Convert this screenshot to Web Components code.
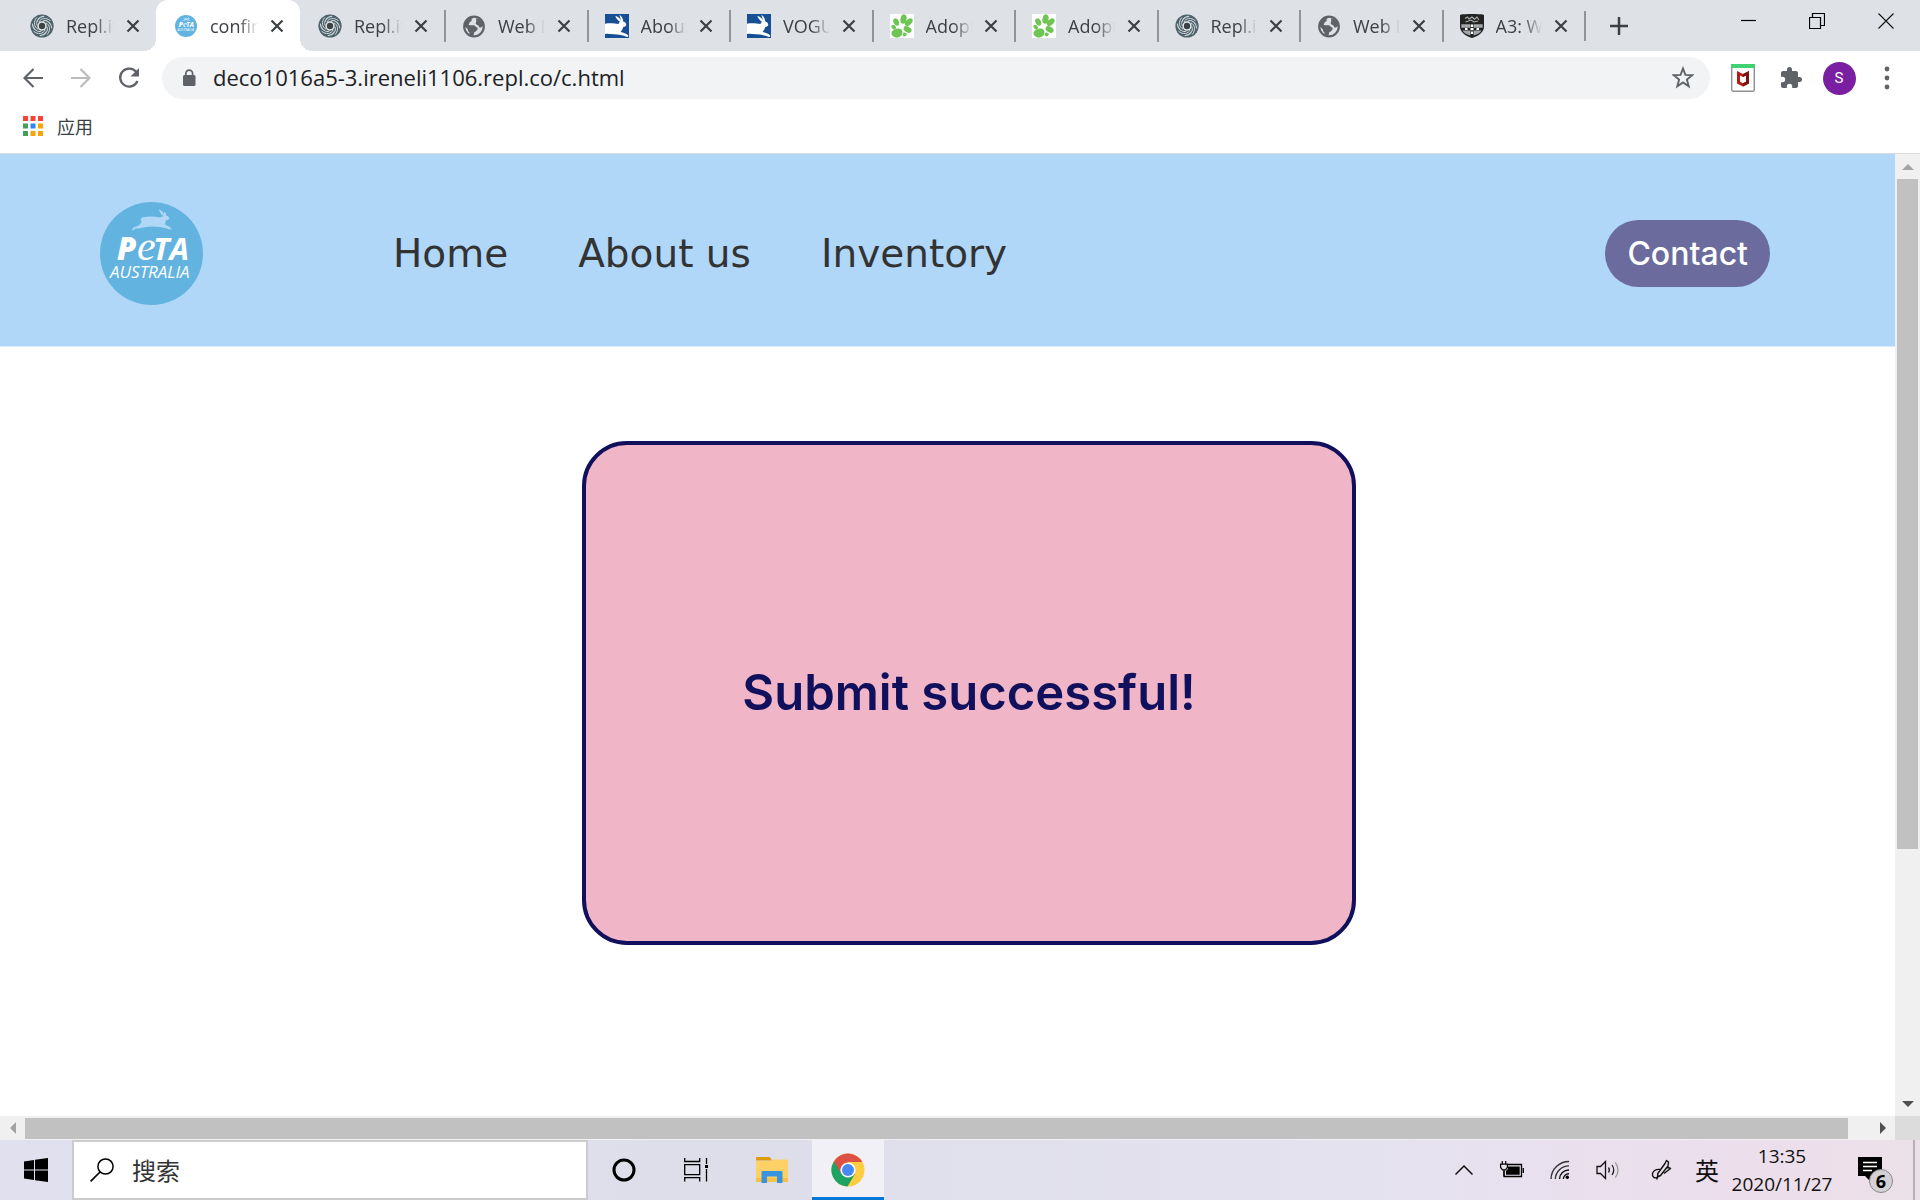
<!DOCTYPE html>
<html lang="en">
<head>
<meta charset="utf-8">
<title>confirmation</title>
<style>
  body { margin: 0; background: #fff; }
</style>
</head>
<body>
<desktop-screen></desktop-screen>

<script>
const UI_FONT = '"Open Sans", "Noto Sans CJK SC", sans-serif';

function define(name, markup, setup) {
  const template = document.createElement('template');
  template.innerHTML = markup;
  customElements.define(name, class extends HTMLElement {
    constructor() {
      super();
      this.attachShadow({ mode: 'open' }).append(template.content.cloneNode(true));
    }
    connectedCallback() { if (setup) setup(this, this.shadowRoot); }
  });
}

const swirlArms = Array.from({ length: 8 }, (_, i) =>
  `<path d="M9 8C10.500 4.200 16 3 20.500 6.800" transform="rotate(${i * 45} 12 12)"/>`).join('');

const ICONS = {
  swirl: `<svg width="24" height="24" viewBox="0 0 24 24"><circle cx="12" cy="12" r="11.600" fill="#4e626b"/><g fill="none" stroke="#cfd7db" stroke-width="1">${swirlArms}</g><circle cx="12" cy="12" r="4.700" fill="#e4e8ea"/><circle cx="12" cy="12" r="3.200" fill="#3b4347"/></svg>`,
  globe: `<svg width="24" height="24" viewBox="0 0 24 24"><circle cx="12" cy="12.500" r="9.800" fill="none" stroke="#5f6368" stroke-width="2.2"/><path fill="#5f6368" d="M2 11C3 6 7 2.500 12 2.500c-.5 1.500-1.500 2-2.500 2.500.5 1.500 0 2.500-1.500 3-.8.6-.5 2-1.500 2.500.5 1 2.500.5 5 .8 1.800.2 2 1.700 3 2 1.500.2 1.500 1.500.8 2.500-1 1-1.300 2.200-2.800 2.200-.7 1-.5 2.500-1 3.500C8 22 7 21 7.500 18.500 5.500 17.500 6.500 15 4.500 14 3 13 2 12.500 2 11zM14 4.500c3-.5 7 3 7.500 7-1 1-2.500 2.500-4 2-1-1-.5-2.200-2-2.500-1.500-.5-2.200-1.500-1.500-3 .8-1 0-2 0-3.500z"/></svg>`,
  rabbit: `<svg width="24" height="24" viewBox="0 0 24 24"><rect width="24" height="24" fill="#174f94"/><path fill="#fff" d="M0 9.700C5 8.700 10 9.500 13.500 10c.3-1 .7-1.600 1.500-2.200C13 6.500 11 4.500 10.300 2c2.500.3 4.500 2 5.700 4.500L14.400.8c2.300 1.500 3.800 4 3.800 6.800 2 .6 3 1.800 3 3.200.2 1.300-1.200 2-3 2.200-.5 2-1.400 3.500-2.700 5 3 .5 5.500 1.500 7.500 3.300.8.800 0 2-1 1.600-4-1.600-8.500-2.400-13-2.600C6 20.200 3 19.600 0 20z"/></svg>`,
  paw: `<svg width="24" height="24" viewBox="0 0 24 24"><rect width="24" height="24" fill="#fff"/><g fill="#6fc553"><ellipse cx="13.500" cy="5" rx="3" ry="4.700" transform="rotate(14 13.500 5)"/><ellipse cx="6.200" cy="8" rx="2.700" ry="3.900" transform="rotate(-24 6.200 8)"/><ellipse cx="18.700" cy="8.200" rx="2.800" ry="4.600" transform="rotate(48 18.700 8.200)"/><ellipse cx="3.700" cy="13.200" rx="2" ry="2.700" transform="rotate(-45 3.700 13.200)"/><ellipse cx="17.600" cy="15.500" rx="2.800" ry="4.300" transform="rotate(-62 17.600 15.500)"/><path d="M1.600 18.300c.8-2.300 4-3.800 7-3.900 2.600 0 4.200 1.800 3.800 4.600-.4 3-3.200 5-6.200 4.600-2.900-.5-5.200-2.600-4.600-5.300z"/><path d="M13.500 18.500q2.500-.5 3.500 1.500-.8 2.500-3 2.500-2-1.500-.5-4z"/></g></svg>`,
  crest: `<svg width="24" height="24" viewBox="0 0 24 24"><path fill="#222" d="M0 1c2-1.200 22-1.200 24 0v12c0 5-6 9.500-12 11C6 22.500 0 18 0 13z"/><path fill="none" stroke="#aeb2b6" stroke-width="1.100" d="M5 4.500l2.500-1.500L9 5l3-2 2.500 2.200L17 3l2 3M5.500 8l3-1 2.500-1 3 2 4-1"/><path fill="#a4a8ac" d="M1.300 10.200h9v3.500h-9zM13.700 10.200h9v3.500h-9zM2.500 16.500h7.800v5C6.500 20.500 3.500 18.800 2.500 16.500zM13.700 16.500h7.800c-1 2.300-4 4-7.800 5z"/><path fill="#fff" d="M10.800 10.500h2.400v2.500h-2.400zM10.500 14h3v2.200h-3zM10.800 17.500h2.400V20h-2.400zM5 14h2.500v2H5zM16.500 14H19v2h-2.500z"/></svg>`,
  cross: `<svg width="14" height="14" viewBox="0 0 14 14"><path d="M1.500 1.500l11 11M12.500 1.500l-11 11" stroke="#3c4043" stroke-width="2.200"/></svg>`,
  plus: `<svg width="18" height="18" viewBox="0 0 18 18"><path d="M9 0v18M0 9h18" stroke="#3c4043" stroke-width="2.500"/></svg>`,
  minimize: `<svg width="16" height="16" viewBox="0 0 16 16"><path d="M1 7.500h15" stroke="#000" stroke-width="1.200"/></svg>`,
  restore: `<svg width="16" height="16" viewBox="0 0 16 16"><path d="M.5 4.500h11v11H.5zM3.500 4.500v-4h12v12h-4" fill="none" stroke="#000" stroke-width="1.200"/></svg>`,
  closeWindow: `<svg width="16" height="16" viewBox="0 0 16 16"><path d="M.5.5l15 15M15.500.5l-15 15" stroke="#111" stroke-width="1.100"/></svg>`,
  back: `<svg width="20" height="20" viewBox="0 0 20 20"><path d="M20 10H2M10.500 1L1.500 10l9 9" fill="none" stroke="#5f6368" stroke-width="2.200"/></svg>`,
  forward: `<svg width="20" height="20" viewBox="0 0 20 20"><path d="M0 10h18M9.500 1l9 9-9 9" fill="none" stroke="#babcbe" stroke-width="2.200"/></svg>`,
  reload: `<svg width="22" height="22" viewBox="0 0 22 22"><path d="M18.300 5A9 9 0 1 0 19.500 14" fill="none" stroke="#5f6368" stroke-width="2.300"/><path d="M21 1v8.500h-8.500z" fill="#5f6368"/></svg>`,
  lock: `<svg width="14" height="18" viewBox="0 0 14 18"><rect x="1" y="6" width="12.500" height="11" rx="1.500" fill="#5f6368"/><path d="M3.800 7V4.500a3.400 3.400 0 0 1 6.800 0V7" fill="none" stroke="#5f6368" stroke-width="1.700"/></svg>`,
  star: `<svg width="22" height="24" viewBox="0 0 22 24"><path d="M11 2.500l2.400 6.400 6.800.3-5.300 4.300 1.800 6.700L11 16.400l-5.700 3.800 1.800-6.700-5.300-4.300 6.800-.3z" fill="none" stroke="#5f6368" stroke-width="1.900"/></svg>`,
  shield: `<svg width="24" height="28" viewBox="0 0 24 28"><rect x=".7" y=".7" width="22.600" height="26.600" rx="1.500" fill="#fff" stroke="#8d9196" stroke-width="1.400"/><path d="M0 0h24v4H0z" fill="#3ed273"/><path d="M6 7l6 3 6-3v12.500L12 22.500l-6-3zM9 11.500v6.300l3 1.500 3-1.500v-6.300l-3 1.500z" fill="#b51c12" fill-rule="evenodd"/><path d="M12 10l6-3v12.500L12 22.500v-3.200l3-1.500v-6.300L12 13z" fill="#7d1411"/></svg>`,
  puzzle: `<svg width="24" height="24" viewBox="0 0 24 24"><path fill="#5f6368" d="M20.500 11H19V7c0-1.100-.9-2-2-2h-4V3.500a2.500 2.500 0 0 0-5 0V5H4c-1.100 0-2 .9-2 2v3.800h1.500a2.700 2.700 0 0 1 0 5.400H2V20c0 1.100.9 2 2 2h3.800v-1.500a2.700 2.700 0 0 1 5.400 0V22H17c1.100 0 2-.9 2-2v-4h1.500a2.500 2.500 0 0 0 0-5z"/></svg>`,
  dots: `<svg width="6" height="24" viewBox="0 0 6 24"><g fill="#5f6368"><circle cx="3" cy="3" r="2.400"/><circle cx="3" cy="12" r="2.400"/><circle cx="3" cy="21" r="2.400"/></g></svg>`,
  apps: `<svg width="20" height="20" viewBox="0 0 20 20"><path fill="#f44336" d="M0 0h5v5H0zM7.500 0h5v5h-5zM15 0h5v5h-5z"/><path fill="#43a05b" d="M0 7.500h5v5H0zM0 15h5v5H0z"/><path fill="#2f86f6" d="M7.500 7.500h5v5h-5z"/><path fill="#f2a60c" d="M15 7.500h5v5h-5zM7.500 15h5v5h-5zM15 15h5v5h-5z"/></svg>`,
  windows: `<svg width="24" height="24" viewBox="0 0 24 24"><path d="M0 3.400L10 2v9.500H0zM11 1.800L24 0v11.500H11zM0 12.500h10V22L0 20.600zM11 12.500h13V24l-13-1.800z"/></svg>`,
  search: `<svg width="24" height="24" viewBox="0 0 24 24"><circle cx="15.500" cy="8.500" r="7.600" fill="none" stroke="#000" stroke-width="1.500"/><path d="M10 14L.6 23.400" stroke="#000" stroke-width="1.700"/></svg>`,
  cortana: `<svg width="24" height="24" viewBox="0 0 24 24"><circle cx="12" cy="12" r="10" fill="none" stroke="#000" stroke-width="3"/></svg>`,
  taskView: `<svg width="24" height="24" viewBox="0 0 24 24"><path d="M.7 0v3.500h15V0M.7 6.700h15v10H.7zM.7 23.500V19.700h15v3.800M22.500 0v6M22.500 11v12.500" fill="none" stroke="#000" stroke-width="1.300"/><path d="M21 7h3v3h-3z"/></svg>`,
  folder: `<svg width="32" height="28" viewBox="0 0 32 28"><path d="M0 2q0-1 1-1h12q1 0 1.500 1l1.500 2.500H0z" fill="#dd9b08"/><path d="M0 5h15l1.500-1.500H31q1 0 1 1V25q0 1-1 1H1q-1 0-1-1z" fill="#fdd166"/><path d="M0 22h32v3q0 1-1 1H1q-1 0-1-1z" fill="#f8c146"/><path d="M5.500 27V16q0-1 1-1h19q1 0 1 1v11H21v-6.500H11V27z" fill="#3993dd"/></svg>`,
  chrome: `<svg width="34" height="34" viewBox="0 0 34 34"><circle cx="17" cy="17" r="16.500" fill="#fdcd3f"/><path d="M17 17L3 8.200A16.500 16.500 0 0 0 16.500 33.500L24 21z" fill="#1da462"/><path d="M3 8.300A16.500 16.500 0 0 1 31.400 9H17L10.300 21z" fill="#dd5144"/><circle cx="17" cy="17" r="7.600" fill="#fff"/><circle cx="17" cy="17" r="6" fill="#4688f4"/></svg>`,
  chevron: `<svg width="20" height="12" viewBox="0 0 20 12"><path d="M1.500 10.500L10 2l8.500 8.500" fill="none" stroke="#111" stroke-width="1.500"/></svg>`,
  battery: `<svg width="24" height="18" viewBox="0 0 24 18"><path d="M8 3.500h13.500v12H4V10M23.300 7v5" fill="none" stroke="#000" stroke-width="1.300"/><path d="M8 5.500h11.700v8.200H6V10l2-2z"/><path d="M2.300 0v3M5.700 0v3M.6 3.200h6.800v3.300L5.500 8.800h-3L.6 6.500zM4 9v6" fill="#e6e1ef" stroke="#000" stroke-width="1.200"/></svg>`,
  wifi: `<svg width="20" height="20" viewBox="0 0 20 20"><circle cx="17.300" cy="17.300" r="1.700"/><g fill="none" stroke-width="1.400"><path d="M1 19A18 18 0 0 1 19 1.500M5.300 19A13.500 13.500 0 0 1 19 5.900" stroke="#333"/><path d="M9.500 19A9.300 9.300 0 0 1 19 10M13.300 19A5.500 5.500 0 0 1 19 13.700" stroke="#111"/></g></svg>`,
  speaker: `<svg width="24" height="20" viewBox="0 0 24 20"><path d="M1 6.500h3.500L9.500 1.500v17L4.500 13.500H1z" fill="none" stroke="#111" stroke-width="1.300"/><path d="M12.500 7.500q1.800 2.500 0 5M16 5q3.500 5 0 10" fill="none" stroke="#222" stroke-width="1.300"/><path d="M19.300 2.300q5.400 7.700 0 15.400" fill="none" stroke="#999" stroke-width="1.300"/></svg>`,
  pen: `<svg width="22" height="22" viewBox="0 0 22 22"><path d="M15.500 1.500l2 1.500-.5 4-7.500 9.500-3 1.500.3-3.500L14 4.500zM16 8l3.500 1.500L13 14.500M10 10.500Q3 9.500 1.500 14.500C.8 18 4 20 6.500 18l-.8 2.500" fill="none" stroke="#111" stroke-width="1.400" stroke-linejoin="round"/></svg>`,
  notice: `<svg width="24" height="26" viewBox="0 0 24 26"><path d="M0 0h24v19H12v5l-5-5H0z"/><path d="M5 5.500h14M5 9.500h14M5 13.500h9" stroke="#fff" stroke-width="1.300"/></svg>`,
  arrow: `<svg width="12" height="6" viewBox="0 0 12 6"><path d="M0 6L6 0l6 6z" fill="currentColor"/></svg>`,
};

define('ui-icon', `<style>:host{display:inline-flex;flex:none} svg{display:block}</style>`, (el, root) => {
  if (!root.querySelector('svg')) root.innerHTML += ICONS[el.getAttribute('name')];
});

define('peta-logo', `
<style>
  :host { display: block; flex: none; width: 103px; height: 103px; }
  svg { display: block; width: 100%; height: 100%; }
  text { fill: #fff; font-style: italic; font-family: "Open Sans", sans-serif; }
</style>
<svg viewBox="0 0 103 103" role="img" aria-label="PeTA Australia">
  <circle cx="51.500" cy="51.500" r="51.500" fill="#62b3e0"/>
  <path fill="#b0d7f8" d="M42 15.500q9-2 18 0l3.500-1.500q-4-2.500-4.500-6.800 3.500 1.500 5 4.800l.5-2.500q2 1.500 1.800 4.200 3.500 1 2.700 3.300-1 1.500-3.200 1.300l-.8 4.200q4.500 2 7 4.500-2.500.8-5-.6-6-2-15-2-8 .4-12.500 2l-4 .2-3.300 2.200q-1-1.600 1.500-3.600l4-1.200q3.500-2.200 4-4.500-2.200-1.500.3-4z"/>
  <text x="17" y="58" font-size="31" font-weight="800">P</text>
  <text x="37" y="58" font-size="42" style="font-family:'Liberation Serif',serif">e</text>
  <text x="53" y="58" font-size="31" font-weight="700">TA</text>
  <text x="10" y="76" font-size="17">AUSTRALIA</text>
</svg>`);

define('browser-tab', `
<style>
  :host { display: flex; flex: 1 1 0; align-items: center; min-width: 0; height: 51px; box-sizing: border-box; padding: 0 16px 0 16px; position: relative; border-left: 2px solid transparent; }
  :host([divided]) { border-image: linear-gradient(transparent 11px, #919498 11px 41px, transparent 41px) 1; border-left: 2px solid; }
  :host([wide]) { flex: 0 0 144px; }
  :host([active]) { background: #fff; border-left-color: #fff; border-radius: 12px 12px 0 0; }
  :host([active])::before, :host([active])::after { content: ""; position: absolute; bottom: 0; width: 12px; height: 12px; }
  :host([active])::before { left: -14px; background: radial-gradient(circle at 0 0, transparent 12px, #fff 12px); }
  :host([active])::after { right: -12px; background: radial-gradient(circle at 100% 0, transparent 12px, #fff 12px); }
  .icon { display: flex; flex: none; justify-content: center; width: 24px; margin-right: 12px; }
  .title { flex: 1; min-width: 0; overflow: hidden; white-space: nowrap; font: 18px/26px ${UI_FONT}; color: #3c4043; -webkit-mask-image: linear-gradient(90deg, #000 60%, transparent 100%); mask-image: linear-gradient(90deg, #000 60%, transparent 100%); }
  button { display: flex; flex: none; margin: 0 0 0 12px; padding: 0; border: 0; background: none; }
</style>
<span class="icon"><slot name="icon"></slot></span>
<span class="title"><slot></slot></span>
<button aria-label="Close tab"><ui-icon name="cross"></ui-icon></button>`);

define('tab-strip', `
<style>
  :host { display: flex; align-items: flex-start; justify-content: space-between; height: 51px; background: #dee1e6; }
  .tabs { display: flex; flex: 0 1 1616px; align-items: center; padding-left: 12px; min-width: 0; }
  button { display: flex; align-items: center; justify-content: center; padding: 0; border: 0; background: none; }
  .new { flex: none; margin-left: 24px; }
  .end { flex: none; width: 2px; height: 30px; background: #919498; }
  .window { display: flex; flex: none; }
  .window button { width: 69px; height: 42px; }
  peta-logo { width: 22px; height: 22px; }
</style>
<div class="tabs">
  <browser-tab wide><ui-icon slot="icon" name="swirl"></ui-icon>Repl.it</browser-tab>
  <browser-tab wide active><peta-logo slot="icon"></peta-logo>confirm</browser-tab>
  <browser-tab wide><ui-icon slot="icon" name="swirl"></ui-icon>Repl.it</browser-tab>
  <browser-tab divided><ui-icon slot="icon" name="globe"></ui-icon>Web D</browser-tab>
  <browser-tab divided><ui-icon slot="icon" name="rabbit"></ui-icon>About</browser-tab>
  <browser-tab divided><ui-icon slot="icon" name="rabbit"></ui-icon>VOGUE</browser-tab>
  <browser-tab divided><ui-icon slot="icon" name="paw"></ui-icon>Adopt</browser-tab>
  <browser-tab divided><ui-icon slot="icon" name="paw"></ui-icon>Adopt</browser-tab>
  <browser-tab divided><ui-icon slot="icon" name="swirl"></ui-icon>Repl.it</browser-tab>
  <browser-tab divided><ui-icon slot="icon" name="globe"></ui-icon>Web D</browser-tab>
  <browser-tab divided><ui-icon slot="icon" name="crest"></ui-icon>A3: W</browser-tab>
  <span class="end"></span>
  <button class="new" aria-label="New tab"><ui-icon name="plus"></ui-icon></button>
</div>
<div class="window">
  <button aria-label="Minimize"><ui-icon name="minimize"></ui-icon></button>
  <button aria-label="Restore"><ui-icon name="restore"></ui-icon></button>
  <button aria-label="Close"><ui-icon name="closeWindow"></ui-icon></button>
</div>`);

define('address-bar', `
<style>
  :host { display: flex; align-items: center; padding: 6px 9px 6px 9px; background: #fff; }
  button { display: flex; flex: none; align-items: center; justify-content: center; width: 48px; height: 42px; padding: 0; border: 0; background: none; }
  .field { display: flex; flex: 1; align-items: center; height: 42px; margin: 0 9px 0 9px; padding: 0 3px 0 20px; border-radius: 21px; background: #f1f3f4; box-sizing: border-box; }
  input { flex: 1; min-width: 0; height: 40px; margin: 0 0 2px 17px; padding: 0; border: 0; outline: 0; box-sizing: border-box; font: 22px/40px ${UI_FONT}; color: #202124; background: none; }
  .avatar span { display: flex; align-items: center; justify-content: center; width: 33px; height: 33px; border-radius: 50%; background: #7b1fa2; color: #fff; font: 15px/33px Roboto, sans-serif; }
</style>
<button aria-label="Back"><ui-icon name="back"></ui-icon></button>
<button aria-label="Forward"><ui-icon name="forward"></ui-icon></button>
<button aria-label="Reload"><ui-icon name="reload"></ui-icon></button>
<div class="field">
  <ui-icon name="lock"></ui-icon>
  <input type="text" aria-label="Address" value="deco1016a5-3.ireneli1106.repl.co/c.html" spellcheck="false">
  <button aria-label="Bookmark"><ui-icon name="star"></ui-icon></button>
</div>
<button aria-label="Antivirus"><ui-icon name="shield"></ui-icon></button>
<button aria-label="Extensions"><ui-icon name="puzzle"></ui-icon></button>
<button class="avatar" aria-label="Profile"><span>S</span></button>
<button aria-label="Menu"><ui-icon name="dots"></ui-icon></button>`);

define('bookmark-bar', `
<style>
  :host { display: flex; align-items: center; height: 42px; padding: 0 0 6px 23px; border-bottom: 1px solid #dcdcdc; background: #fff; }
  a { display: flex; align-items: center; gap: 14px; color: #3c4043; text-decoration: none; font: 18px/24px "Noto Sans CJK SC", sans-serif; }
</style>
<a href="#apps"><ui-icon name="apps"></ui-icon>应用</a>`);

define('site-header', `
<style>
  :host { display: flex; align-items: center; padding: 48px 125px 41px 100px; background: #b0d7f8; border-bottom: 1px solid #d8ebfb; }
  nav { display: flex; flex: 1; gap: 70px; margin-left: 190px; }
  nav a { color: #333; text-decoration: none; font: 39px/48px "DejaVu Sans", sans-serif; }
  .contact { padding: 14px 22px; border-radius: 34px; background: #6b6b9e; color: #fff; text-decoration: none; font: 500 32px/39px Inter, sans-serif; }
</style>
<peta-logo></peta-logo>
<nav><a href="#home">Home</a><a href="#about">About us</a><a href="#inventory">Inventory</a></nav>
<a class="contact" href="#contact">Contact</a>`);

define('message-card', `
<style>
  :host { display: flex; align-items: center; justify-content: center; width: 774px; height: 504px; box-sizing: border-box; border: 4px solid #10105c; border-radius: 45px; background: #f0b6c8; color: #10105c; }
  h1 { margin: 0; font: 600 49px/60px Inter, sans-serif; }
</style>
<h1><slot></slot></h1>`);

define('scroll-bar', `
<style>
  :host { display: flex; flex-direction: column; align-items: center; width: 25px; background: #f0f0f0; }
  button { display: flex; flex: none; align-items: center; justify-content: center; width: 25px; height: 25px; padding: 0; border: 0; background: none; color: #a3a3a3; }
  .last { color: #505050; }
  .track { display: flex; flex: 1; flex-direction: column; }
  .thumb { flex: 0 0 var(--thumb); width: 21px; background: #c1c1c1; }
  .last ui-icon { transform: rotate(180deg); }
  :host([horizontal]) { flex-direction: row; width: auto; height: 24px; }
  :host([horizontal]) .track { flex-direction: row; }
  :host([horizontal]) .thumb { width: auto; height: 21px; }
  :host([horizontal]) ui-icon { transform: rotate(-90deg); }
  :host([horizontal]) .last ui-icon { transform: rotate(90deg); }
</style>
<button aria-label="Scroll back"><ui-icon name="arrow"></ui-icon></button>
<div class="track"><div class="thumb"></div></div>
<button class="last" aria-label="Scroll forward"><ui-icon name="arrow"></ui-icon></button>`);

define('page-view', `
<style>
  :host { display: grid; grid-template: minmax(0, 1fr) 24px / minmax(0, 1fr) 25px; min-height: 0; background: #fff; }
  .page { overflow: hidden; }
  main { display: flex; justify-content: center; padding: 94px 0 0 43px; }
  .down { --thumb: 73.5%; }
  .across { --thumb: 98.8%; }
  .corner { background: #dcdcdc; }
</style>
<div class="page">
  <site-header></site-header>
  <main><message-card>Submit successful!</message-card></main>
</div>
<scroll-bar class="down"></scroll-bar>
<scroll-bar class="across" horizontal></scroll-bar>
<div class="corner"></div>`);

define('task-bar', `
<style>
  :host { display: flex; height: 60px; background: linear-gradient(90deg, #e1e0ee 0, #dedeea 40%, #e5e2f0 72%, #ecdeec 90%, #ece0e8 100%); font-family: ${UI_FONT}; color: #111; }
  button { display: flex; flex: none; align-items: center; justify-content: center; padding: 0; border: 0; background: none; font: inherit; color: inherit; }
  .app { width: 72px; }
  .search { display: flex; flex: 0 1 516px; align-items: center; gap: 18px; box-sizing: border-box; padding: 0 16px; border: 2px solid #ccc; background: #fff; }
  input { flex: 1; min-width: 0; padding: 0; border: 0; outline: 0; background: none; font: 24px/36px "Noto Sans CJK SC", sans-serif; color: #333; }
  input::placeholder { color: #333; opacity: 1; }
  .pinned { display: flex; flex: 1; gap: 4px; }
  .current { background: #f2f0f7; box-shadow: inset 0 -3px #0078d7; }
  .tray { display: flex; flex: none; }
  .tray button { width: 48px; }
  .tray .ink { margin-left: 6px; }
  .tray .lang { width: 42px; font: 24px/36px "Noto Sans CJK SC", sans-serif; }
  .tray .clock { flex-direction: column; width: 108px; margin-right: 22px; font-size: 19px; line-height: 28px; }
  .tray .notice { position: relative; width: 36px; padding-right: 12px; }
  .badge { position: absolute; left: 11px; top: 29px; width: 22px; height: 22px; border: 1px solid #888; border-radius: 50%; background: #d4d1d5; color: #000; font: 700 18px/22px "Open Sans", sans-serif; }
  .edge { width: 5px; margin-left: 19px; border-left: 2px solid #b7b2ba; }
</style>
<button class="app" aria-label="Start"><ui-icon name="windows"></ui-icon></button>
<label class="search"><ui-icon name="search"></ui-icon><input type="text" aria-label="搜索" placeholder="搜索"></label>
<button class="app" aria-label="Cortana"><ui-icon name="cortana"></ui-icon></button>
<div class="pinned">
  <button class="app" aria-label="Task view"><ui-icon name="taskView"></ui-icon></button>
  <button class="app" aria-label="File Explorer"><ui-icon name="folder"></ui-icon></button>
  <button class="app current" aria-label="Chrome"><ui-icon name="chrome"></ui-icon></button>
</div>
<div class="tray">
  <button aria-label="Hidden icons"><ui-icon name="chevron"></ui-icon></button>
  <button aria-label="Battery"><ui-icon name="battery"></ui-icon></button>
  <button aria-label="Network"><ui-icon name="wifi"></ui-icon></button>
  <button aria-label="Volume"><ui-icon name="speaker"></ui-icon></button>
  <button class="ink" aria-label="Ink"><ui-icon name="pen"></ui-icon></button>
  <button class="lang">英</button>
  <button class="clock"><span>13:35</span><span>2020/11/27</span></button>
  <button class="notice" aria-label="Notifications"><ui-icon name="notice"></ui-icon><span class="badge">6</span></button>
  <span class="edge"></span>
</div>`);

define('desktop-screen', `
<style>
  :host { display: flex; flex-direction: column; height: 100vh; }
  page-view { flex: 1; }
</style>
<tab-strip></tab-strip>
<address-bar></address-bar>
<bookmark-bar></bookmark-bar>
<page-view></page-view>
<task-bar></task-bar>`);
</script>
</body>
</html>
